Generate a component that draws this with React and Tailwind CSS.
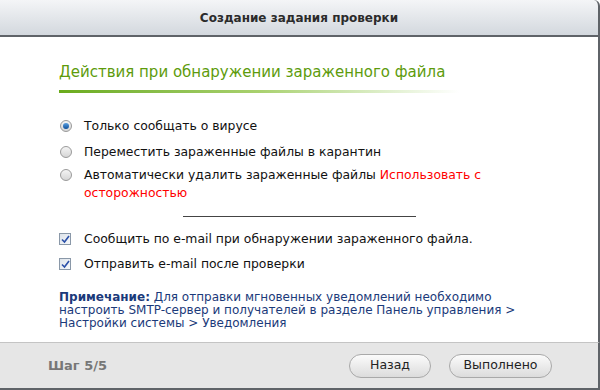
const Radio = ({ checked }) => (
  <span className="w-[12px] h-[12px] rounded-full border border-[#9a9a9a] bg-gradient-to-b from-[#f4f4f4] to-[#d6d6d6] flex items-center justify-center shrink-0">
    {checked && (
      <span className="w-[6px] h-[6px] rounded-full bg-gradient-to-b from-[#5aa0e0] to-[#0b4f9a]" />
    )}
  </span>
);

const Check = () => (
  <span className="w-[12px] h-[12px] border border-[#8a98a8] bg-gradient-to-br from-[#dde3ea] to-[#f6f8fa] flex items-center justify-center shrink-0">
    <svg width="9" height="9" viewBox="0 0 9 9">
      <path d="M1 4.5 L3.5 7 L8 1" fill="none" stroke="#2a4fa8" strokeWidth="1.6" />
    </svg>
  </span>
);

const App = () => {
  return (
    <div
      className="w-[600px] h-[390px] flex flex-col bg-white text-[12px] overflow-hidden"
      style={{ fontFamily: "'DejaVu Sans', Verdana, sans-serif" }}
    >
      {/* Title bar */}
      <div className="h-[37px] shrink-0 rounded-tr-[6px] border-r-2 border-b-2 border-[#5f6368] bg-gradient-to-b from-[#f4f5f7] to-[#d3d8de] flex items-center justify-center">
        <span className="font-bold text-[#2b2b2b] text-[12px]">Создание задания проверки</span>
      </div>

      {/* Body */}
      <div className="flex-1 border-r-2 border-[#5f6368] pl-[59px] pr-6 pt-[25px]">
        <h1 className="text-[#5d9b0c] text-[15px] leading-[20px]">
          Действия при обнаружении зараженного файла
        </h1>
        <div className="mt-[8px] h-[3px] w-[400px] bg-gradient-to-r from-[#6aab1a] via-[#a9d16e] to-white" />

        <div className="mt-[26px] ml-[1px] flex flex-col text-[#111] text-[12.4px] leading-[14px]">
          <label className="flex items-center gap-[12px]">
            <Radio checked />
            <span>Только сообщать о вирусе</span>
          </label>
          <label className="mt-[12px] flex items-center gap-[12px]">
            <Radio />
            <span>Переместить зараженные файлы в карантин</span>
          </label>
          <label className="mt-[7px] flex items-start gap-[12px]">
            <span className="mt-[3px]"><Radio /></span>
            <span className="leading-[18px]">
              Автоматически удалить зараженные файлы{" "}
              <span className="text-[#ff0000]">Использовать с</span>
              <br />
              <span className="text-[#ff0000]">осторожностью</span>
            </span>
          </label>
        </div>

        <div className="mt-[14px] ml-[124px] w-[233px] h-px bg-[#444]" />

        <div className="mt-[15px] flex flex-col text-[#111] text-[12.4px] leading-[14px]">
          <label className="flex items-center gap-[13px]">
            <Check />
            <span>Сообщить по e-mail при обнаружении зараженного файла.</span>
          </label>
          <label className="mt-[11px] flex items-center gap-[13px]">
            <Check />
            <span>Отправить e-mail после проверки</span>
          </label>
        </div>

        <p className="mt-[20px] w-[460px] text-[#1b3a7a] leading-[13px]">
          <span className="font-bold">Примечание:</span> Для отправки мгновенных уведомлений необходимо настроить
          SMTP-сервер и получателей в разделе Панель управления &gt; Настройки системы &gt; Уведомления
        </p>
      </div>

      {/* Footer */}
      <div className="h-[48px] shrink-0 border-t border-[#c4c4c4] border-r-2 border-r-[#5f6368] border-b-2 border-b-[#5f6368] bg-[#e6e6e6] flex items-center pl-[48px] pr-[46px]">
        <span className="font-bold text-[#777] text-[13px]">Шаг 5/5</span>
        <div className="ml-auto flex gap-[18px]">
          <button className="w-[82px] h-[24px] rounded-full border border-[#a9a9a9] bg-gradient-to-b from-[#fbfbfb] to-[#dcdcdc] text-[#222] text-[12.5px]">
            Назад
          </button>
          <button className="w-[103px] h-[24px] rounded-full border border-[#a9a9a9] bg-gradient-to-b from-[#fbfbfb] to-[#dcdcdc] text-[#222] text-[12.5px]">
            Выполнено
          </button>
        </div>
      </div>
    </div>
  );
};

export default App;
